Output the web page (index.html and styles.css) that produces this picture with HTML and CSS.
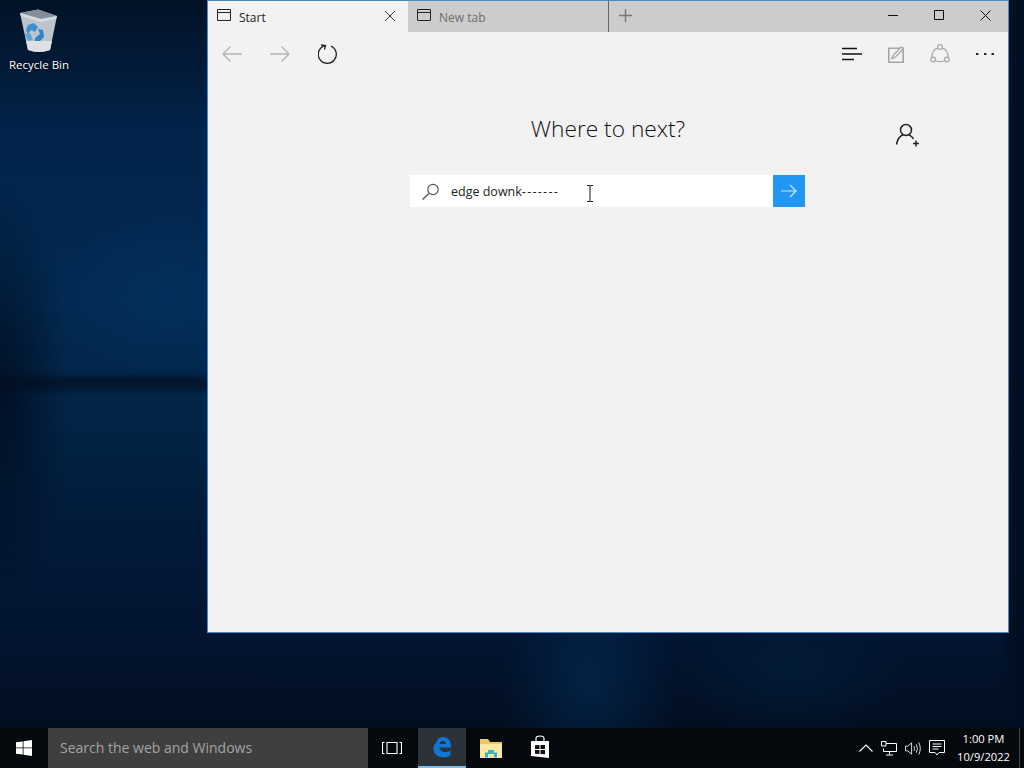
FILE: index.html
```html
<!DOCTYPE html>
<html lang="en">
<head>
    <meta charset="UTF-8">
    <title>Start</title>
    <link rel="stylesheet" href="styles.css">
</head>
<body>
    <div id="desktop">
        <!-- Desktop icon -->
        <div class="desktop-icon">
            <svg width="46" height="46" viewBox="0 0 46 46">
                <path d="M4 5 L22 1.500 L41 8 L34 42 Q23 46 12 42 Z" fill="#bcc5cc"/>
                <path d="M4 5 L22 1.500 L41 8 L25 11 Z" fill="#838e98"/>
                <path d="M4 5 L25 11 L41 8 L40 11 L25 14 L5 8 Z" fill="#d5dade"/>
                <path d="M10 33 L36 33 L34 42 Q23 46 12 42 Z" fill="#dfe1e3"/>
                <path d="M12 17 L18 15 L22 19 L19 24 L15 22 L12 26 L10 22 Z" fill="#3a8fd0"/>
                <path d="M9 26 L14 25 L17 32 L12 33 Z" fill="#57a5dd"/>
                <path d="M19 30 L24 26 L22 21 L27 22 L28 29 L24 33 L19 33 Z" fill="#2f83c6"/>
            </svg>
            <span>Recycle Bin</span>
        </div>

        <!-- Browser window -->
        <div class="window">
            <div class="titlebar">
                <div class="tab tab-active">
                    <svg class="tab-icon" width="14" height="12" viewBox="0 0 14 12"><path d="M.5.5h13v11H.5zM.5 3.500h13" fill="none" stroke="#222"/></svg>
                    <span class="tab-title">Start</span>
                    <svg class="tab-close" width="12" height="12" viewBox="0 0 12 12"><path d="M1 1l10 10M11 1L1 11" stroke="#333" fill="none"/></svg>
                </div>
                <div class="tab tab-idle">
                    <svg class="tab-icon" width="14" height="12" viewBox="0 0 14 12"><path d="M.5.5h13v11H.5zM.5 3.500h13" fill="none" stroke="#222"/></svg>
                    <span class="tab-title">New tab</span>
                </div>
                <div class="new-tab">
                    <svg width="13" height="13" viewBox="0 0 13 13"><path d="M6.500 0v13M0 6.500h13" stroke="#777" stroke-width="1.400" fill="none"/></svg>
                </div>
                <div class="caption">
                    <div class="caption-btn"><svg width="11" height="11" viewBox="0 0 11 11"><path d="M0 5.500h10" stroke="#111" fill="none"/></svg></div>
                    <div class="caption-btn"><svg width="11" height="11" viewBox="0 0 11 11"><path d="M.5.5h9v9h-9z" stroke="#111" fill="none"/></svg></div>
                    <div class="caption-btn"><svg width="11" height="11" viewBox="0 0 11 11"><path d="M.5.5l10 10M10.500.5l-10 10" stroke="#111" fill="none"/></svg></div>
                </div>
            </div>

            <div class="toolbar">
                <div class="toolbar-left">
                    <svg width="20" height="16" viewBox="0 0 20 16"><path d="M20 8H1M8.500.5L1 8l7.500 7.500" stroke="#b4b4b4" stroke-width="1.300" fill="none"/></svg>
                    <svg width="20" height="16" viewBox="0 0 20 16"><path d="M0 8h19M11.500.5L19 8l-7.500 7.500" stroke="#b4b4b4" stroke-width="1.300" fill="none"/></svg>
                    <svg width="20" height="20" viewBox="0 0 20 20"><path d="M7 1.600A9 9 0 1 0 13 2.100M6.500 5.500L7.500 1.500 3 1" stroke="#222" stroke-width="1.300" fill="none"/></svg>
                </div>
                <div class="toolbar-right">
                    <svg width="20" height="14" viewBox="0 0 20 14"><path d="M0 1.500h15M0 7h20M0 12.500h12" stroke="#111" stroke-width="1.300" fill="none"/></svg>
                    <svg width="16" height="17" viewBox="0 0 16 17"><path d="M.8 2.200h14.400v14H.8z" fill="none" stroke="#a6a6a6" stroke-width="1.600"/><path d="M4 12.500l1-3L13 1l2.500 1.500-8 8.500z" fill="#f2f2f2" stroke="#a6a6a6" stroke-width="1.300"/></svg>
                    <svg width="20" height="20" viewBox="0 0 20 20"><g fill="none" stroke="#a8a8a8" stroke-width="1.200"><circle cx="10" cy="3" r="2.400"/><circle cx="3.200" cy="15.500" r="2.400"/><circle cx="16.800" cy="15.500" r="2.400"/><path d="M7.800 4.200A8 8 0 0 0 2 13M12.200 4.200A8 8 0 0 1 18 13M5.500 16.700Q10 18.600 14.500 16.700"/></g></svg>
                    <svg width="18" height="4" viewBox="0 0 18 4"><path d="M0 1h2.400v2H0zM8 1h2.400v2H8zM15.500 1h2.400v2h-2.400z" fill="#222"/></svg>
                </div>
            </div>

            <div class="start-page">
                <div class="heading-row">
                    <h1>Where to next?</h1>
                    <svg class="add-person" width="25" height="25" viewBox="0 0 25 25"><g fill="none" stroke="#222" stroke-width="1.500"><circle cx="11" cy="8" r="5.500"/><path d="M1.500 22.500Q3 14.500 8 13M14 13q3 1 4.500 4M21 18.500v6M18 21.500h6"/></g></svg>
                </div>
                <div class="search-box">
                    <svg class="search-icon" width="19" height="17" viewBox="0 0 18 17"><circle cx="11.500" cy="6.500" r="5.200" fill="none" stroke="#555" stroke-width="1.200"/><path d="M7.500 10.500L1 16.500" stroke="#555" stroke-width="1.400" fill="none"/></svg>
                    <span class="search-text">edge downk<span class="dashes">-------</span></span>
                    <svg class="cursor" width="8" height="17" viewBox="0 0 8 17"><path d="M1 .5h2.500L4 1l.5-.5H7M4 1v15M1 16.500h2.500L4 16l.5.5H7" stroke="#111" fill="none"/></svg>
                    <div class="go-button">
                        <svg width="16" height="14" viewBox="0 0 16 14"><path d="M0 7h15M9 1l6 6-6 6" stroke="#cfe8ff" stroke-width="1.200" fill="none"/></svg>
                    </div>
                </div>
            </div>
        </div>
    </div>

    <!-- Taskbar -->
    <div class="taskbar">
        <div class="start-btn">
            <svg width="16" height="16" viewBox="0 0 16 16"><path d="M0 2.300L6.700 1.400V7.500H0zM7.500 1.300L16 0V7.500H7.500zM0 8.300H6.700V14.600L0 13.700zM7.500 8.300H16V16L7.500 14.800z" fill="#fff"/></svg>
        </div>
        <div class="taskbar-search">Search the web and Windows</div>
        <div class="task-btn">
            <svg width="20" height="14" viewBox="0 0 20 14"><path d="M5 1.500h10v11H5zM2.500 1.500H.5v11h2M17.500 1.500h2v11h-2" fill="none" stroke="#fff" stroke-width="1.100"/></svg>
        </div>
        <div class="task-btn task-active">
            <svg width="20" height="22" viewBox="0 0 20 22"><path d="M3 9.500C4 4 7.500 1 11 1c5 0 8.500 4 8 10.500H7.500c0 4.500 6.500 6 11 3v5c-6 3.500-16 2-17-6C1 10 3 6.500 6 4.500 4.500 6 3.500 7.500 3 9.500zM7.500 8h6.500c0-4-6-4-6.500 0z" fill="#0f78d4" fill-rule="evenodd"/></svg>
        </div>
        <div class="task-btn">
            <svg width="22" height="19" viewBox="0 0 22 19"><path d="M0 0h8l2 3h12v16H0z" fill="#edc766"/><path d="M0 5h22v14H0z" fill="#fbe7a0"/><path d="M5 18.500v-5h3V11h6v2.500h3v5h-3V15H8v3.500z" fill="#3aaed8"/></svg>
        </div>
        <div class="task-btn">
            <svg class="store-icon" width="20" height="24" viewBox="0 0 20 24"><path d="M1 6h18v17L1 21z" fill="#fff"/><path d="M6 6V3.500Q6 1 10 1t4 2.500V6" fill="none" stroke="#fff" stroke-width="1.200"/><path d="M5 10.300l4.500-.3v4H5zM10.500 10H15v4h-4.500zM5 15h4.500v4L5 18.700zM10.500 15H15v4.300l-4.500-.3z" fill="#111"/></svg>
        </div>
        <div class="tray">
            <svg width="14" height="8" viewBox="0 0 14 8"><path d="M.5 7.500L7 1l6.500 6.500" stroke="#fff" stroke-width="1.100" fill="none"/></svg>
            <svg width="16" height="15" viewBox="0 0 16 15"><path d="M4.500 2.500h11v8h-13v-3M8.500 10.500v3M5 14h7" fill="none" stroke="#fff"/><path d="M.5.500h4.500v4.500H.5z" fill="#111" stroke="#fff"/></svg>
            <svg width="16" height="15" viewBox="0 0 17 15"><path d="M.5 5h2.500L7 1.500v12L3 10H.5zM9.500 5q1.500 2.500 0 5M12 3q2.500 4.500 0 9M14.500 1q3.500 6.500 0 13" fill="none" stroke="#fff" stroke-width=".9"/></svg>
            <svg width="16" height="16" viewBox="0 0 16 16"><path d="M.5.500h15v12H10L8 15l-2-2.500H.5zM3.500 4h9M3.500 6.500h9M3.500 9h6" fill="none" stroke="#fff"/></svg>
        </div>
        <div class="clock">
            <span>1:00 PM</span>
            <span>10/9/2022</span>
        </div>
        <div class="show-desktop"></div>
    </div>
</body>
</html>
```

FILE: styles.css
```css
* {
    margin: 0;
    padding: 0;
    box-sizing: border-box;
}

html, body {
    width: 1024px;
    height: 768px;
    overflow: hidden;
}

body {
    font-family: 'Open Sans', 'Noto Sans', sans-serif;
    display: flex;
    flex-direction: column;
    background: #03132b;
}

/* Desktop + wallpaper */
#desktop {
    position: relative;
    height: 728px;
    background:
        linear-gradient(90deg, transparent 1000px, #020f22 1012px),
        linear-gradient(180deg, transparent 372px, rgba(2, 14, 32, 0.7) 381px, rgba(2, 14, 32, 0.55) 388px, transparent 396px),
        radial-gradient(ellipse 110px 90px at 170px 295px, rgba(3, 50, 94, 0.7), transparent),
        radial-gradient(ellipse 90px 130px at 590px 680px, rgba(3, 40, 78, 0.75), transparent),
        radial-gradient(ellipse 120px 70px at 790px 670px, rgba(3, 32, 62, 0.6), transparent),
        radial-gradient(ellipse 70px 220px at 0 400px, rgba(1, 12, 30, 0.85), transparent),
        linear-gradient(180deg, #021226 0, #02234a 130px, #022a52 300px, #022446 420px, #021b3a 520px, #021430 640px, #020e20 728px);
}

.desktop-icon {
    width: 78px;
    display: flex;
    flex-direction: column;
    align-items: center;
    padding-top: 8px;
    color: #fff;
    font-size: 11.500px;
    line-height: 16px;
    text-shadow: 0 1px 2px #000;
}

.desktop-icon svg {
    margin-bottom: 3px;
}

/* Browser window */
.window {
    position: absolute;
    left: 207px;
    top: 0;
    width: 802px;
    height: 633px;
    border: 1px solid #4a8ac4;
    background: #f2f2f2;
    display: flex;
    flex-direction: column;
}

.titlebar {
    height: 31px;
    display: flex;
    background: #cccccc;
}

.tab {
    width: 200px;
    display: flex;
    align-items: center;
    padding-left: 9px;
    font-size: 12px;
}

.tab-active {
    background: #f2f2f2;
    color: #222;
}

.tab-idle {
    color: #6d6d6d;
    border-right: 1px solid #666;
    width: 201px;
}

.tab-icon {
    margin-right: 8px;
    margin-top: -3px;
}

.tab-title {
    margin-top: 1px;
    flex: 1;
}

.tab-close {
    margin-right: 12px;
    margin-top: -2px;
}

.new-tab {
    width: 32px;
    display: flex;
    align-items: center;
    justify-content: center;
    padding-bottom: 2px;
}

.caption {
    margin-left: auto;
    display: flex;
}

.caption-btn {
    width: 46px;
    display: flex;
    align-items: center;
    justify-content: center;
    padding-bottom: 2px;
}

.toolbar {
    height: 44px;
    display: flex;
    align-items: center;
    justify-content: space-between;
    padding: 0 14px;
}

.toolbar-left {
    display: flex;
    align-items: center;
    gap: 28px;
}

.toolbar-right {
    display: flex;
    align-items: center;
    gap: 26px;
}

/* Start page */
.start-page {
    flex: 1;
    display: flex;
    flex-direction: column;
    align-items: center;
    padding-top: 36px;
}

.heading-row {
    position: relative;
    width: 100%;
    text-align: center;
}

h1 {
    font-size: 22.700px;
    font-weight: 300;
    line-height: 34px;
    color: #111;
}

.add-person {
    position: absolute;
    left: 687px;
    top: 10px;
}

.search-box {
    margin-top: 29px;
    margin-right: 1px;
    width: 395px;
    height: 32px;
    background: #fff;
    display: flex;
    align-items: center;
    padding-left: 11px;
    font-size: 12.500px;
    color: #222;
}

.search-icon {
    flex: none;
}

.search-text {
    margin-left: 11px;
    width: 135px;
    white-space: nowrap;
}

.dashes {
    letter-spacing: 1.300px;
}

.cursor {
    margin-top: 5px;
    flex: none;
}

.go-button {
    margin-left: auto;
    width: 32px;
    height: 32px;
    background: #2196f3;
    display: flex;
    align-items: center;
    justify-content: center;
}

/* Taskbar */
.taskbar {
    height: 40px;
    display: flex;
    background: #05080c;
    color: #fff;
}

.start-btn {
    width: 48px;
    display: flex;
    align-items: center;
    justify-content: center;
}

.taskbar-search {
    width: 320px;
    background: #3f3f3f;
    color: #a3a3a3;
    font-size: 14px;
    line-height: 40px;
    padding-left: 12px;
}

.task-btn {
    width: 48px;
    margin-right: 1px;
    display: flex;
    align-items: center;
    justify-content: center;
}

.task-active {
    background: #2b3238;
    border-bottom: 2px solid #7fbcec;
    margin-left: 1px;
}

.store-icon {
    margin-bottom: 3px;
}

.tray {
    margin-left: auto;
    display: flex;
    align-items: center;
    gap: 8px;
    padding-right: 3px;
}

.clock {
    width: 71px;
    display: flex;
    flex-direction: column;
    align-items: center;
    justify-content: center;
    font-size: 11.200px;
    line-height: 18px;
}

.show-desktop {
    width: 5px;
    border-left: 1px solid #444;
}
```
